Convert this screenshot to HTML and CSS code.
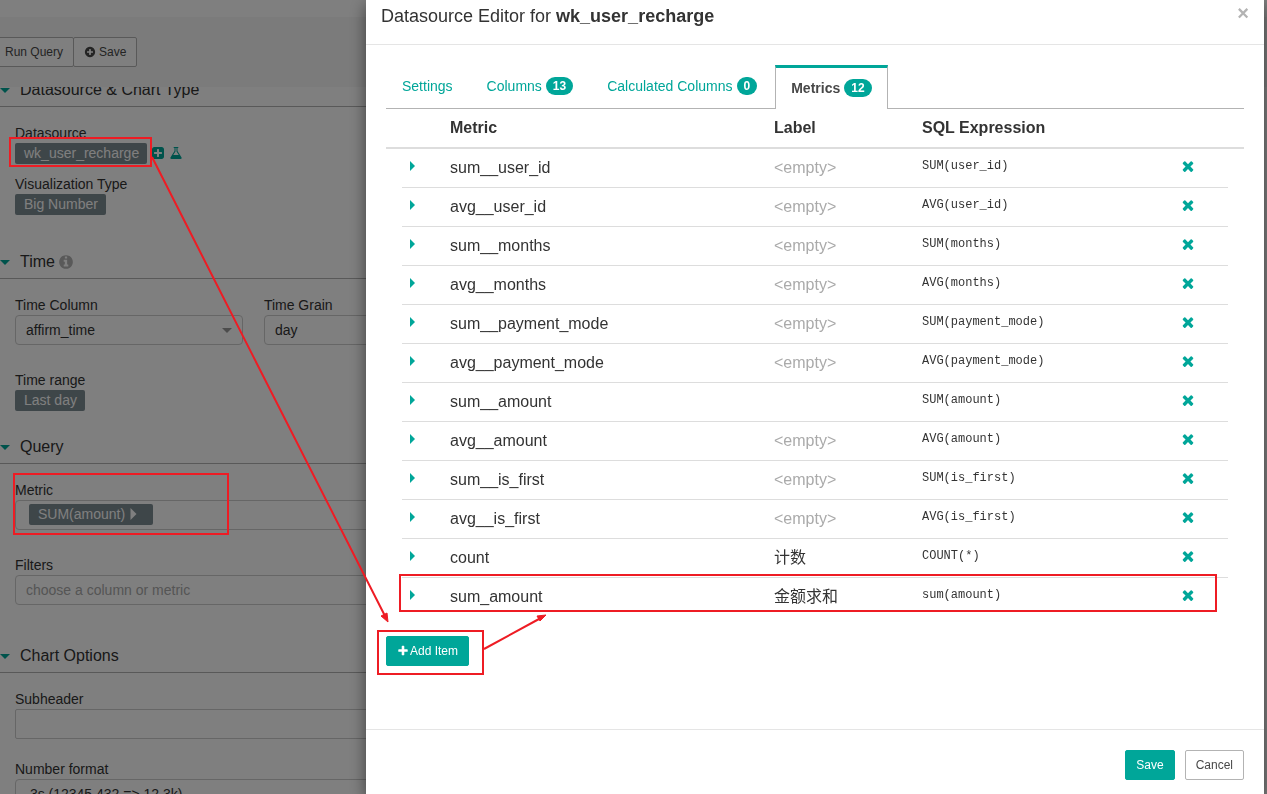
FILE: index.html
```html
<!DOCTYPE html>
<html lang="en">
<head>
<meta charset="utf-8">
<title>Datasource Editor</title>
<link rel="stylesheet" href="styles.css">
</head>
<body>
<svg class="symbols" aria-hidden="true">
  <symbol id="times" viewBox="0 0 1792 1792"><path d="M1490 1322q0 40-28 68l-136 136q-28 28-68 28t-68-28l-294-294-294 294q-28 28-68 28t-68-28l-136-136q-28-28-28-68t28-68l294-294-294-294q-28-28-28-68t28-68l136-136q28-28 68-28t68 28l294 294 294-294q28-28 68-28t68 28l136 136q28 28 28 68t-28 68l-294 294 294 294q28 28 28 68z"/></symbol>
  <symbol id="plus" viewBox="0 0 1792 1792"><path d="M1600 736v192q0 40-28 68t-68 28h-416v416q0 40-28 68t-68 28h-192q-40 0-68-28t-28-68v-416h-416q-40 0-68-28t-28-68v-192q0-40 28-68t68-28h416v-416q0-40 28-68t68-28h192q40 0 68 28t28 68v416h416q40 0 68 28t28 68z"/></symbol>
  <symbol id="plus-circle" viewBox="0 0 1792 1792"><path d="M1344 960v-128q0-26-19-45t-45-19h-256v-256q0-26-19-45t-45-19h-128q-26 0-45 19t-19 45v256h-256q-26 0-45 19t-19 45v128q0 26 19 45t45 19h256v256q0 26 19 45t45 19h128q26 0 45-19t19-45v-256h256q26 0 45-19t19-45zm320-64q0 209-103 385.5t-279.5 279.5-385.5 103-385.5-103-279.5-279.5-103-385.5 103-385.5 279.5-279.5 385.5-103 385.5 103 279.5 279.5 103 385.5z"/></symbol>
  <symbol id="plus-square" viewBox="0 0 1792 1792"><path d="M1408 960v-128q0-26-19-45t-45-19h-320v-320q0-26-19-45t-45-19h-128q-26 0-45 19t-19 45v320h-320q-26 0-45 19t-19 45v128q0 26 19 45t45 19h320v320q0 26 19 45t45 19h128q26 0 45-19t19-45v-320h320q26 0 45-19t19-45zm256-544v960q0 119-84.5 203.5t-203.5 84.5h-960q-119 0-203.5-84.5t-84.5-203.5v-960q0-119 84.500-203.500t203.500-84.500h960q119 0 203.500 84.500t84.500 203.500z"/></symbol>
  <symbol id="flask" viewBox="0 0 1792 1792"><path d="M1591 1448q56 89 21.5 152.5t-140.5 63.5h-1152q-106 0-140.5-63.5t21.5-152.5l503-793v-399h-64q-26 0-45-19t-19-45 19-45 45-19h512q26 0 45 19t19 45-19 45-45 19h-64v399zm-779-725l-272 429h712l-272-429-20-31v-436h-128v436z"/></symbol>
  <symbol id="info" viewBox="0 0 1792 1792"><path d="M1152 1376v-160q0-14-9-23t-23-9h-96v-512q0-14-9-23t-23-9h-320q-14 0-23 9t-9 23v160q0 14 9 23t23 9h96v320h-96q-14 0-23 9t-9 23v160q0 14 9 23t23 9h448q14 0 23-9t9-23zm-128-896v-160q0-14-9-23t-23-9h-192q-14 0-23 9t-9 23v160q0 14 9 23t23 9h192q14 0 23-9t9-23zm640 416q0 209-103 385.5t-279.5 279.5-385.5 103-385.5-103-279.5-279.5-103-385.5 103-385.5 279.5-279.5 385.5-103 385.5 103 279.5 279.5 103 385.5z"/></symbol>
  <symbol id="bolt" viewBox="0 0 1792 1792"><path d="M1333 566q18 20 7 44l-540 1157q-13 25-42 25-4 0-14-2-17-5-25.5-19t-4.5-30l197-808-406 101q-4 1-12 1-18 0-31-11-18-15-13-39l201-825q4-14 16-23t28-9h328q19 0 32 12.5t13 29.5q0 8-5 18l-171 463 396-98q8-2 12-2 19 0 34 15z"/></symbol>
  <symbol id="caret-down" viewBox="0 0 10 5"><path d="M0 0h10L5 5z"/></symbol>
  <symbol id="caret-right" viewBox="0 0 5 10"><path d="M0 0l5 5-5 5z"/></symbol>
</svg>

<div class="explore">
  <div class="toolbar">
    <div class="btn-group">
      <button class="btn" type="button"><svg class="icon-sm"><use href="#bolt"/></svg>Run Query</button>
      <button class="btn" type="button"><svg class="icon-sm"><use href="#plus-circle"/></svg>Save</button>
    </div>
  </div>
  <div class="pane">
    <form class="controls">
      <section class="section section-source">
        <h2 class="section-title"><svg class="caret-down"><use href="#caret-down"/></svg>Datasource &amp; Chart Type</h2>
        <div class="fields fields-tight">
          <div class="field">
            <span class="field-label">Datasource</span>
            <div class="tag-row">
              <button class="tag" type="button">wk_user_recharge</button>
              <a class="tag-link" href="#" aria-label="Add"><svg class="icon-md"><use href="#plus-square"/></svg></a>
              <a class="tag-link" href="#" aria-label="Explore in SQL Lab"><svg class="icon-md"><use href="#flask"/></svg></a>
            </div>
          </div>
          <div class="field">
            <span class="field-label">Visualization Type</span>
            <div class="tag-row"><button class="tag" type="button">Big Number</button></div>
          </div>
        </div>
      </section>
      <section class="section section-time">
        <h2 class="section-title"><svg class="caret-down"><use href="#caret-down"/></svg>Time<svg class="icon-lg info"><use href="#info"/></svg></h2>
        <div class="fields">
          <div class="field-pair">
            <div class="field">
              <label class="field-label" for="time-column">Time Column</label>
              <div class="select-wrap">
                <select class="input" id="time-column"><option>affirm_time</option></select>
                <svg class="select-arrow"><use href="#caret-down"/></svg>
              </div>
            </div>
            <div class="field">
              <label class="field-label" for="time-grain">Time Grain</label>
              <div class="select-wrap">
                <select class="input" id="time-grain"><option>day</option></select>
                <svg class="select-arrow"><use href="#caret-down"/></svg>
              </div>
            </div>
          </div>
          <div class="field">
            <span class="field-label">Time range</span>
            <div class="tag-row"><button class="tag" type="button">Last day</button></div>
          </div>
        </div>
      </section>
      <section class="section section-query">
        <h2 class="section-title"><svg class="caret-down"><use href="#caret-down"/></svg>Query</h2>
        <div class="fields">
          <div class="field">
            <span class="field-label">Metric</span>
            <div class="input metric-box"><button class="tag metric-tag" type="button">SUM(amount)<svg class="tag-caret"><use href="#caret-right"/></svg></button></div>
          </div>
          <div class="field">
            <label class="field-label" for="filters">Filters</label>
            <input class="input" id="filters" type="text" placeholder="choose a column or metric">
          </div>
        </div>
      </section>
      <section class="section">
        <h2 class="section-title"><svg class="caret-down"><use href="#caret-down"/></svg>Chart Options</h2>
        <div class="fields fields-options">
          <div class="field">
            <label class="field-label" for="subheader">Subheader</label>
            <input class="input square" id="subheader" type="text">
          </div>
          <div class="field">
            <label class="field-label" for="number-format">Number format</label>
            <select class="input" id="number-format"><option>.3s (12345.432 =&gt; 12.3k)</option></select>
          </div>
        </div>
      </section>
    </form>
  </div>
</div>

<div class="backdrop">
  <div class="modal" role="dialog" aria-labelledby="modal-title">
    <header class="modal-header">
      <h1 class="modal-title" id="modal-title">Datasource Editor for <strong>wk_user_recharge</strong></h1>
      <button class="close" type="button" aria-label="Close">×</button>
    </header>
    <div class="modal-body">
      <nav class="tabs">
        <a class="tab" href="#">Settings</a>
        <a class="tab" href="#">Columns <span class="badge">13</span></a>
        <a class="tab" href="#">Calculated Columns <span class="badge">0</span></a>
        <a class="tab active" href="#">Metrics <span class="badge">12</span></a>
      </nav>
      <table class="metrics">
        <thead>
          <tr><th></th><th>Metric</th><th>Label</th><th>SQL Expression</th><th></th></tr>
        </thead>
        <tbody>
          <tr><td><button class="toggle" type="button" aria-label="Expand"><svg class="caret-right"><use href="#caret-right"/></svg></button></td><td>sum__user_id</td><td class="empty">&lt;empty&gt;</td><td><code>SUM(user_id)</code></td><td><button class="remove" type="button" aria-label="Delete"><svg class="icon-lg"><use href="#times"/></svg></button></td></tr>
          <tr><td><button class="toggle" type="button" aria-label="Expand"><svg class="caret-right"><use href="#caret-right"/></svg></button></td><td>avg__user_id</td><td class="empty">&lt;empty&gt;</td><td><code>AVG(user_id)</code></td><td><button class="remove" type="button" aria-label="Delete"><svg class="icon-lg"><use href="#times"/></svg></button></td></tr>
          <tr><td><button class="toggle" type="button" aria-label="Expand"><svg class="caret-right"><use href="#caret-right"/></svg></button></td><td>sum__months</td><td class="empty">&lt;empty&gt;</td><td><code>SUM(months)</code></td><td><button class="remove" type="button" aria-label="Delete"><svg class="icon-lg"><use href="#times"/></svg></button></td></tr>
          <tr><td><button class="toggle" type="button" aria-label="Expand"><svg class="caret-right"><use href="#caret-right"/></svg></button></td><td>avg__months</td><td class="empty">&lt;empty&gt;</td><td><code>AVG(months)</code></td><td><button class="remove" type="button" aria-label="Delete"><svg class="icon-lg"><use href="#times"/></svg></button></td></tr>
          <tr><td><button class="toggle" type="button" aria-label="Expand"><svg class="caret-right"><use href="#caret-right"/></svg></button></td><td>sum__payment_mode</td><td class="empty">&lt;empty&gt;</td><td><code>SUM(payment_mode)</code></td><td><button class="remove" type="button" aria-label="Delete"><svg class="icon-lg"><use href="#times"/></svg></button></td></tr>
          <tr><td><button class="toggle" type="button" aria-label="Expand"><svg class="caret-right"><use href="#caret-right"/></svg></button></td><td>avg__payment_mode</td><td class="empty">&lt;empty&gt;</td><td><code>AVG(payment_mode)</code></td><td><button class="remove" type="button" aria-label="Delete"><svg class="icon-lg"><use href="#times"/></svg></button></td></tr>
          <tr><td><button class="toggle" type="button" aria-label="Expand"><svg class="caret-right"><use href="#caret-right"/></svg></button></td><td>sum__amount</td><td></td><td><code>SUM(amount)</code></td><td><button class="remove" type="button" aria-label="Delete"><svg class="icon-lg"><use href="#times"/></svg></button></td></tr>
          <tr><td><button class="toggle" type="button" aria-label="Expand"><svg class="caret-right"><use href="#caret-right"/></svg></button></td><td>avg__amount</td><td class="empty">&lt;empty&gt;</td><td><code>AVG(amount)</code></td><td><button class="remove" type="button" aria-label="Delete"><svg class="icon-lg"><use href="#times"/></svg></button></td></tr>
          <tr><td><button class="toggle" type="button" aria-label="Expand"><svg class="caret-right"><use href="#caret-right"/></svg></button></td><td>sum__is_first</td><td class="empty">&lt;empty&gt;</td><td><code>SUM(is_first)</code></td><td><button class="remove" type="button" aria-label="Delete"><svg class="icon-lg"><use href="#times"/></svg></button></td></tr>
          <tr><td><button class="toggle" type="button" aria-label="Expand"><svg class="caret-right"><use href="#caret-right"/></svg></button></td><td>avg__is_first</td><td class="empty">&lt;empty&gt;</td><td><code>AVG(is_first)</code></td><td><button class="remove" type="button" aria-label="Delete"><svg class="icon-lg"><use href="#times"/></svg></button></td></tr>
          <tr><td><button class="toggle" type="button" aria-label="Expand"><svg class="caret-right"><use href="#caret-right"/></svg></button></td><td>count</td><td lang="zh">计数</td><td><code>COUNT(*)</code></td><td><button class="remove" type="button" aria-label="Delete"><svg class="icon-lg"><use href="#times"/></svg></button></td></tr>
          <tr><td><button class="toggle" type="button" aria-label="Expand"><svg class="caret-right"><use href="#caret-right"/></svg></button></td><td>sum_amount</td><td lang="zh">金额求和</td><td><code>sum(amount)</code></td><td><button class="remove" type="button" aria-label="Delete"><svg class="icon-lg"><use href="#times"/></svg></button></td></tr>
        </tbody>
      </table>
      <button class="btn btn-primary btn-add" type="button"><svg class="icon-sm"><use href="#plus"/></svg>Add Item</button>
    </div>
    <footer class="modal-footer">
      <button class="btn btn-primary" type="button">Save</button>
      <button class="btn" type="button">Cancel</button>
    </footer>
  </div>
</div>

<svg class="annotations" aria-hidden="true">
  <rect x="10" y="138" width="141" height="28"/>
  <rect x="14" y="474" width="214" height="60"/>
  <rect x="400" y="575" width="816" height="36"/>
  <rect x="378" y="631" width="105" height="43"/>
  <path d="M152 157L385 616M484 649L539 619"/>
  <path class="arrow-head" d="M388 622L381 616L387 613zM546 615L537 616L540 621z"/>
</svg>
</body>
</html>
```
FILE: styles.css
```css
* {
  box-sizing: border-box;
}

body {
  margin: 0;
  height: 100vh;
  overflow: hidden;
  background: #fff;
  color: #333;
  font-family: "Liberation Sans", "Noto Sans CJK SC", sans-serif;
  font-size: 14px;
}

button,
input,
select {
  font-family: inherit;
  font-size: inherit;
}

svg {
  display: block;
  flex: none;
  fill: currentColor;
}

.symbols {
  position: absolute;
  width: 0;
  height: 0;
}

.icon-sm { width: 12px; height: 12px; }
.icon-md { width: 14px; height: 14px; }
.icon-lg { width: 16px; height: 16px; }

.btn {
  display: flex;
  align-items: center;
  gap: 3px;
  height: 30px;
  padding: 0 10px;
  border: 1px solid #b3b3b3;
  border-radius: 2px;
  background: #fff;
  color: #484848;
  font-size: 12px;
}

.btn-primary {
  border-color: #00a699;
  background: #00a699;
  color: #fff;
}

/* Explore view */

.explore {
  display: flex;
  flex-direction: column;
  height: 100vh;
  padding-top: 17px;
}

.toolbar {
  flex: none;
  height: 70px;
  padding-top: 20px;
  background: #f7f7f7;
}

.btn-group {
  display: flex;
  margin-left: -21px;
}

.btn-group .btn + .btn {
  margin-left: -1px;
}

.pane {
  flex: 1;
  min-height: 0;
  overflow: hidden;
}

.controls {
  width: 40%;
  min-width: 480px;
  margin-top: -7px;
}

.section-title {
  display: flex;
  align-items: center;
  height: 27px;
  margin: 0;
  padding-bottom: 6px;
  border-bottom: 1px solid #b3b3b3;
  font-size: 16px;
  font-weight: 400;
}

.caret-down {
  width: 10px;
  height: 5px;
  margin-right: 10px;
  color: #00a699;
}

.info {
  margin-left: 3px;
  color: #b3b3b3;
}

.section-source { padding-bottom: 37px; }
.section-time { padding-bottom: 26px; }
.section-query { padding-bottom: 41px; }

.fields {
  display: flex;
  flex-direction: column;
  gap: 27px;
  padding: 18px 15px 0;
}

.fields-tight { gap: 12px; }
.fields-options { gap: 22px; }

.field {
  display: flex;
  flex-direction: column;
  gap: 2px;
}

.field-pair {
  display: grid;
  grid-template-columns: 1fr 1fr;
  gap: 21px;
}

.field-label {
  line-height: 16px;
}

.tag-row {
  display: flex;
  align-items: center;
}

.tag {
  height: 21px;
  padding: 0 8px 2px 9px;
  border: 0;
  border-radius: 2px;
  background: #7d8c92;
  color: #fff;
}

.tag-link {
  margin-left: 4px;
  padding-bottom: 1px;
  color: #00a699;
}

.input {
  width: 100%;
  height: 30px;
  padding: 0 10px;
  border: 1px solid #ccc;
  border-radius: 4px;
  background: #fff;
  color: #333;
  appearance: none;
}

.input::placeholder {
  color: #aaa;
}

.square {
  border-radius: 2px;
}

.select-wrap {
  display: grid;
  align-items: center;
}

.select-wrap > * {
  grid-area: 1 / 1;
}

.select-arrow {
  justify-self: end;
  width: 10px;
  height: 5px;
  margin-right: 11px;
  color: #999;
}

.metric-box {
  display: flex;
  align-items: flex-start;
  padding: 3px 13px;
}

.metric-tag {
  display: flex;
  align-items: center;
  gap: 5px;
  padding-right: 16px;
}

.tag-caret {
  width: 7px;
  height: 12px;
}

/* Modal */

.backdrop {
  position: fixed;
  inset: 0;
  display: flex;
  padding: 0 3px 0 366px;
  background: rgba(0, 0, 0, 0.5);
}

.modal {
  flex: 1;
  display: flex;
  flex-direction: column;
  background: #fff;
  box-shadow: 0 5px 15px rgba(0, 0, 0, 0.5);
}

.modal-header {
  display: flex;
  justify-content: space-between;
  height: 45px;
  padding: 4px 15px 0;
  border-bottom: 1px solid #e5e5e5;
}

.modal-title {
  margin: 0;
  font-size: 18px;
  font-weight: 400;
  line-height: 24px;
}

.close {
  height: 18px;
  padding: 0;
  border: 0;
  background: none;
  color: #b3b3b3;
  font-size: 20px;
  font-weight: 700;
  line-height: 18px;
}

.modal-body {
  flex: 1;
  padding: 20px;
}

.tabs {
  display: flex;
  align-items: flex-end;
  gap: 2px;
  border-bottom: 1px solid #b3b3b3;
}

.tab {
  display: flex;
  align-items: center;
  gap: 4px;
  height: 43px;
  padding: 0 16px 1px;
  color: #00a699;
  text-decoration: none;
}

.active {
  height: 44px;
  margin-bottom: -1px;
  padding: 0 15px 1px;
  border: solid #b3b3b3;
  border-width: 3px 1px 0;
  border-top-color: #00a699;
  background: #fff;
  color: #484848;
  font-weight: 700;
}

.badge {
  padding: 0 7px;
  border-radius: 10px;
  background: #00a699;
  color: #fff;
  font-size: 12px;
  font-weight: 700;
  line-height: 18px;
}

.metrics {
  display: block;
  font-size: 16px;
}

.metrics thead,
.metrics tbody {
  display: block;
  padding: 0 16px;
}

.metrics thead {
  border-bottom: 2px solid #ddd;
}

.metrics tr {
  display: grid;
  grid-template-columns: 48px 324fr 148fr 258fr 48px;
}

.metrics th {
  padding: 0;
  text-align: left;
  line-height: 38px;
}

.metrics tbody tr {
  height: 39px;
  border-bottom: 1px solid #ddd;
}

.metrics tbody tr:last-child {
  border-bottom: 0;
}

.metrics td {
  padding: 0;
  line-height: 37px;
}

.metrics code {
  display: block;
  font-family: "Liberation Mono", monospace;
  font-size: 12px;
  line-height: 34px;
}

.empty {
  color: #aaa;
}

.toggle,
.remove {
  display: flex;
  align-items: center;
  height: 34px;
  padding: 0;
  border: 0;
  background: none;
  color: #00a699;
}

.toggle {
  padding: 0 8px;
}

.remove {
  height: 33px;
}

.caret-right {
  width: 5px;
  height: 10px;
}

.btn-add {
  gap: 1px;
  margin-top: 19px;
}

.modal-footer {
  display: flex;
  justify-content: flex-end;
  gap: 10px;
  padding: 20px 20px 14px;
  border-top: 1px solid #e5e5e5;
}

/* Callouts drawn over the window */

.annotations {
  position: fixed;
  inset: 0;
  width: 100%;
  height: 100%;
  fill: none;
  stroke: #ee1c24;
  stroke-width: 2;
  pointer-events: none;
}

.arrow-head {
  fill: #ee1c24;
  stroke-width: 1;
}
```
